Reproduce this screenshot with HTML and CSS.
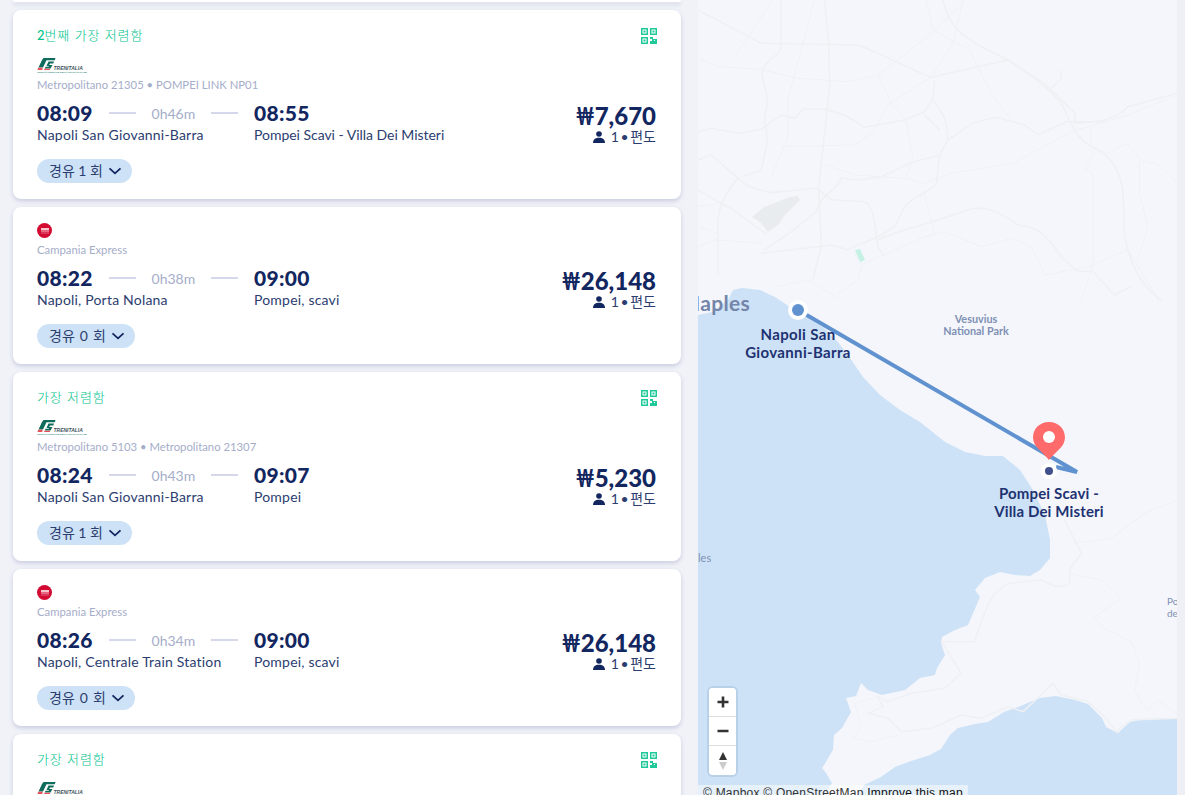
FILE: index.html
```html
<!DOCTYPE html>
<html lang="ko">
<head>
<meta charset="utf-8">
<title>Napoli - Pompei</title>
<link rel="stylesheet" href="styles.css">
</head>
<body>
<svg class="defs" width="0" height="0" aria-hidden="true">
  <defs>
    <symbol id="qr" viewBox="0 0 16 16">
      <g fill="none" stroke="#1fc99a" stroke-width="1.500">
        <rect x=".75" y=".75" width="5.500" height="5.500"/><rect x="9.750" y=".75" width="5.500" height="5.500"/><rect x=".75" y="9.750" width="5.500" height="5.500"/>
      </g>
      <g fill="#1fc99a">
        <rect x="2.500" y="2.500" width="2" height="2"/><rect x="11.500" y="2.500" width="2" height="2"/><rect x="2.500" y="11.500" width="2" height="2"/>
        <path d="M9 9h3v2h4v5H9v-3h2v-2H9zM13 12v1h1v-1z"/>
      </g>
    </symbol>
    <symbol id="person" viewBox="0 0 12 12">
      <circle cx="6" cy="3" r="2.800" fill="#12265f"/>
      <path d="M0 12c0-3.400 2.400-5.200 6-5.200s6 1.800 6 5.200z" fill="#12265f"/>
    </symbol>
    <symbol id="chev" viewBox="0 0 14 8">
      <path d="M1.500 1.300 7 6.300l5.500-5" fill="none" stroke="#12265f" stroke-width="1.800"/>
    </symbol>
    <symbol id="fs" viewBox="0 0 50 16">
      <path d="M6.500 1H18.500L17.800 3.200H9.500L6 10.500H1.500L5 3z" fill="#0f6b5c"/>
      <path d="M11.500 4.500H17L16.300 6.500H13L12.200 8H15.500L13.500 11.500H7.800L8.500 9.800H11.500L12 9H9.500z" fill="#0f6b5c"/>
      <path d="M1.300 10.800H5.800L5.200 13H.4zM7.500 11.700H13.300L12.800 13H7z" fill="#e8505a"/>
      <text x="16.500" y="13" class="fs-name">TRENITALIA</text>
      <text x="0" y="15.800" class="fs-sub">GRUPPO FERROVIE DELLO STATO ITALIANE</text>
    </symbol>
  </defs>
</svg>

<div class="page">
  <main class="results">
    <div class="card-stub"></div>

    <article class="card">
      <div class="top"><span class="tag"><b>2</b>번째 가장 저렴함</span><svg class="qr"><use href="#qr"/></svg></div>
      <svg class="logo-fs"><use href="#fs"/></svg>
      <p class="carrier">Metropolitano 21305 • POMPEI LINK NP01</p>
      <div class="body">
        <div class="route">
          <div class="leg"><span class="time">08:09</span><i class="rule"></i><span class="dur">0h46m</span><i class="rule"></i></div>
          <span class="time">08:55</span>
          <span class="station">Napoli San Giovanni-Barra</span>
          <span class="station station-tight">Pompei Scavi - Villa Dei Misteri</span>
        </div>
        <div class="fare"><span class="price"><span class="won">₩</span>7,670</span><span class="pax"><svg class="person"><use href="#person"/></svg>1 • 편도</span></div>
      </div>
      <button class="stops">경유 1 회<svg class="chev"><use href="#chev"/></svg></button>
    </article>

    <article class="card">
      <span class="logo-ce"><i></i></span>
      <p class="carrier">Campania Express</p>
      <div class="body">
        <div class="route">
          <div class="leg"><span class="time">08:22</span><i class="rule"></i><span class="dur">0h38m</span><i class="rule"></i></div>
          <span class="time">09:00</span>
          <span class="station">Napoli, Porta Nolana</span>
          <span class="station">Pompei, scavi</span>
        </div>
        <div class="fare"><span class="price"><span class="won">₩</span>26,148</span><span class="pax"><svg class="person"><use href="#person"/></svg>1 • 편도</span></div>
      </div>
      <button class="stops stops-wide">경유 0 회<svg class="chev"><use href="#chev"/></svg></button>
    </article>

    <article class="card">
      <div class="top"><span class="tag">가장 저렴함</span><svg class="qr"><use href="#qr"/></svg></div>
      <svg class="logo-fs"><use href="#fs"/></svg>
      <p class="carrier">Metropolitano 5103 • Metropolitano 21307</p>
      <div class="body">
        <div class="route">
          <div class="leg"><span class="time">08:24</span><i class="rule"></i><span class="dur">0h43m</span><i class="rule"></i></div>
          <span class="time">09:07</span>
          <span class="station">Napoli San Giovanni-Barra</span>
          <span class="station">Pompei</span>
        </div>
        <div class="fare"><span class="price"><span class="won">₩</span>5,230</span><span class="pax"><svg class="person"><use href="#person"/></svg>1 • 편도</span></div>
      </div>
      <button class="stops">경유 1 회<svg class="chev"><use href="#chev"/></svg></button>
    </article>

    <article class="card">
      <span class="logo-ce"><i></i></span>
      <p class="carrier">Campania Express</p>
      <div class="body">
        <div class="route">
          <div class="leg"><span class="time">08:26</span><i class="rule"></i><span class="dur">0h34m</span><i class="rule"></i></div>
          <span class="time">09:00</span>
          <span class="station">Napoli, Centrale Train Station</span>
          <span class="station">Pompei, scavi</span>
        </div>
        <div class="fare"><span class="price"><span class="won">₩</span>26,148</span><span class="pax"><svg class="person"><use href="#person"/></svg>1 • 편도</span></div>
      </div>
      <button class="stops stops-wide">경유 0 회<svg class="chev"><use href="#chev"/></svg></button>
    </article>

    <article class="card">
      <div class="top"><span class="tag">가장 저렴함</span><svg class="qr"><use href="#qr"/></svg></div>
      <svg class="logo-fs"><use href="#fs"/></svg>
    </article>
  </main>

  <section class="map">
    <svg class="map-art" viewBox="698 0 479 795" width="479" height="795" aria-hidden="true">
      <path class="sea" d="M698 315 L712 312 L728 300 L733 290 L742 288 L760 290 L775 297 L790 307 L806 317 L823 327 L838 342 L850 358 L863 377 L880 395 L900 410 L920 422 L945 442 L965 452 L985 456 L1003 456 L1020 470 L1033 490 L1045 515 L1050 540 L1050 558 L1040 570 L1030 576 L1015 575 L1000 572 L985 578 L975 590 L980 597 L968 625 L955 630 L942 637 L941 643 L945 655 L937 668 L935 675 L920 678 L905 690 L882 695 L868 690 L861 683 L856 696 L846 698 L851 712 L842 728 L834 735 L833 750 L824 765 L822 768 L826 773 L832 783 L824 795 L698 795Z"/>
      <path class="sea" d="M858 795 L864 785 L881 777 L895 767 L911 761 L930 755 L941 749 L950 735 L958 728 L975 724 L988 722 L1004 712 L1018 707 L1040 698 L1056 696 L1075 700 L1088 704 L1102 718 L1106 727 L1118 733 L1130 722 L1145 719 L1177 718 L1177 795Z"/>
      <path class="airport" d="M752 217 L764 207 L772 204 L790 197 L798 196 L800 200 L785 215 L778 225 L768 232 L760 222Z"/>
      <path class="park" d="M855 250 L860 249 L865 260 L860 262Z"/>
      <g transform="translate(698 0) scale(.3333)">
        <g class="road">
          <path d="M0 30 L190 130 L480 135 C560 165 640 210 700 232 L930 180 L1040 250 L1130 340 L1130 370 C1210 365 1250 360 1290 320 L1437 280"/>
          <path d="M250 0 C245 60 255 120 245 155 C220 180 195 190 192 220 C195 260 215 280 205 330 C190 360 215 400 205 440 L190 510 L130 530"/>
          <path d="M380 0 L392 130 L395 260 L380 400 L362 560 L370 740 L345 835"/>
          <path d="M735 0 C750 70 780 100 850 140 L930 180 C990 220 1050 260 1090 310 C1120 370 1130 410 1180 440 C1230 465 1260 490 1275 570 L1280 710 C1300 800 1330 860 1390 900"/>
          <path d="M0 395 L40 385 L120 400 L190 388 L250 345 L290 355 L315 328 L380 328 L440 345 L500 382 L620 360 L680 335 L705 295 L710 245"/>
          <path d="M680 345 L725 390"/>
          <path d="M705 300 C735 340 745 350 750 420 L725 465 L715 550 C700 575 650 585 620 620 L590 680 C540 720 480 730 450 750 L400 735 L190 760"/>
          <path d="M750 420 L825 368 L895 352 L980 375 L1020 405 L1105 365 L1220 365"/>
          <path d="M430 535 L480 540 L550 530 L640 488 L725 465"/>
          <path d="M0 480 L40 465 L120 535 C150 565 170 565 215 578 L350 565 C375 570 385 600 410 600 L500 605 C530 620 530 680 540 740 L558 768"/>
          <path d="M430 535 C420 560 395 575 370 600 C350 650 370 620 280 695 L200 750"/>
          <path d="M120 535 C70 590 55 640 60 710 L60 820"/>
          <path d="M0 570 L70 610 C110 625 150 670 205 700"/>
          <path d="M540 720 C600 690 700 670 780 640 C830 620 870 610 960 675 C1020 680 1040 700 1090 770 L1135 812 L1185 815 L1250 885 L1298 860"/>
          <path d="M1060 265 L1090 235 L1090 212"/>
        </g>
        <g class="road faint">
          <path d="M110 170 L225 0M0 175 L60 200 L190 208 L300 235 L450 245 L540 225 L700 100 L800 5"/>
          <path d="M350 0 L320 110 L270 300 L270 410 L220 530"/>
          <path d="M685 0 L705 90 L815 150 L880 280 L940 360"/>
          <path d="M250 440 L470 435 L520 400 L575 310 L700 230 L765 130 L795 0"/>
          <path d="M540 225 L580 310 L625 360 L645 480 L625 530"/>
          <path d="M385 495 L470 525 L620 535 L675 550 L760 520 L945 490 L1120 395 L1290 345 L1437 285"/>
          <path d="M470 760 L490 795 L680 710 L740 695 L850 740 L940 715 L1000 740 L1040 825 L1170 800 L1290 750 L1380 900"/>
          <path d="M1180 380 L1180 440 L1230 460 L1285 430 L1330 480 L1380 495 L1437 545"/>
          <path d="M1185 460 L1160 505 L1185 520 L1185 800 L1150 900"/>
          <path d="M1325 480 L1325 580 L1350 680 L1320 780"/>
          <path d="M675 570 L710 700"/>
          <path d="M490 800 L480 840 L420 880M330 840 L430 900M240 860 L330 840"/>
          <path d="M0 740 L50 720 L190 730M0 680 L60 700M0 620 L60 610"/>
        </g>
      </g>
      <g transform="translate(698 500) scale(.3333)">
        <g class="road">
          <path d="M1100 60 L1150 160 L1115 210 L1115 250 C1085 270 1060 255 1030 240 L930 250 C880 280 870 300 830 425 L730 425 L790 520 L740 565 L640 580 L570 605 L540 590 L555 620 L510 640 L570 655 L610 695 L700 685 L790 645 L850 655 L930 620 L975 635 L1035 580 L1065 550 L1090 585 L1170 605 L1220 650 L1255 695 L1300 660 L1437 655"/>
        </g>
        <g class="road faint">
          <path d="M1130 130 L1240 115 L1340 40 L1437 0M1115 220 L1210 240 L1270 295 L1190 350 L1210 380 L1300 425 L1325 490 L1310 570 L1345 630 L1380 600 L1437 640"/>
          <path d="M540 590 L470 610 L490 680 L465 715 L520 725 L600 705"/>
        </g>
      </g>
      <path class="route-line" d="M798 310 L1077 472 L1056 467"/>
      <circle class="stop-ring" cx="798" cy="310" r="10"/>
      <circle class="stop-start" cx="798" cy="310" r="6"/>
      <circle class="stop-ring" cx="1049" cy="471" r="8"/>
      <circle class="stop-end" cx="1049" cy="471" r="4"/>
      <path class="pin" d="M1049 422 C1039.500 422 1033 429 1033 437.500 C1033 447 1043 452 1049 460 C1055 452 1065 447 1065 437.500 C1065 429 1058.500 422 1049 422Z"/>
      <circle class="pin-hole" cx="1049" cy="437" r="6"/>
    </svg>
    <span class="place place-naples">Naples</span>
    <span class="place place-naples-s">les</span>
    <span class="place place-park">Vesuvius<br>National Park</span>
    <span class="place place-po">Po<br>de</span>
    <span class="stop-label label-a">Napoli San<br>Giovanni-Barra</span>
    <span class="stop-label label-b">Pompei Scavi -<br>Villa Dei Misteri</span>
    <div class="zoom">
      <button class="zoom-btn"><svg viewBox="0 0 14 14"><path d="M7 1.500v11M1.500 7h11" stroke="#333" stroke-width="2.600"/></svg></button>
      <button class="zoom-btn"><svg viewBox="0 0 14 14"><path d="M1.500 7h11" stroke="#333" stroke-width="2.600"/></svg></button>
      <button class="zoom-btn"><svg viewBox="0 0 14 20"><path d="M7 1l4 8H3z" fill="#333"/><path d="M7 19l-4-8h8z" fill="#ccc"/></svg></button>
    </div>
    <div class="attrib">© Mapbox © OpenStreetMap <b>Improve this map</b></div>
  </section>
  <div class="edge"></div>
</div>
</body>
</html>
```

FILE: styles.css
```css
* { box-sizing: border-box; }
html, body { margin: 0; height: 795px; overflow: hidden; }
body { font-family: "Lato", "Noto Sans CJK KR", sans-serif; color: #12265f; background: #f0f2f8; }
.defs { position: absolute; }
.page { display: flex; height: 795px; overflow: hidden; }

.results { width: 698px; flex: none; height: 795px; overflow: hidden; padding: 0 17px 0 13px; display: flex; flex-direction: column; gap: 8px; background: #f0f2f8; }
.card-stub { height: 2px; flex: none; background: #fff; border-radius: 0 0 8px 8px; box-shadow: 0 2px 4px rgba(60,70,130,.22); }
.card { flex: none; background: #fff; border-radius: 8px; padding: 16px 25px 16px 24px; box-shadow: 0 2px 4px rgba(60,70,130,.22); }
.top { display: flex; justify-content: space-between; align-items: flex-start; height: 20px; margin-bottom: 11px; }
.tag { font: 300 13px/18px "Noto Sans CJK KR", sans-serif; letter-spacing: .85px; color: #00c48c; }
.tag b { font-weight: 500; font-family: "Lato", sans-serif; letter-spacing: 0; }
.qr { width: 16px; height: 16px; margin: 2px -1px 0 0; display: block; }
.logo-fs { display: block; width: 50px; height: 16px; }
.fs-name { font: italic 700 5px "Liberation Sans", sans-serif; fill: #3f5560; }
.fs-sub { font: 700 2.300px "Liberation Sans", sans-serif; fill: #2b8a78; }
.logo-ce { display: flex; align-items: center; justify-content: center; width: 15px; height: 15px; border-radius: 50%; background: #d30b32; }
.logo-ce i { display: block; width: 8px; height: 6px; background: linear-gradient(#f7c3cd 0 2px, #e8677f 2px 4px, #d9385a 4px); }
.carrier { margin: 4px 0 0; font-size: 11.300px; line-height: 16px; color: #a5adc9; }
.body { display: flex; justify-content: space-between; align-items: flex-start; margin-top: 8px; }
.route { display: grid; grid-template-columns: 217px 1fr; row-gap: 0; align-items: center; }
.leg { display: flex; align-items: center; gap: 16px; padding-right: 16px; }
.time { font-size: 21px; line-height: 24px; font-weight: 900; letter-spacing: .3px; color: #12265f; }
.rule { flex: 1; height: 2px; background: #d5d8ea; }
.dur { font-size: 14px; color: #a5adc9; }
.station { font-size: 14px; line-height: 20px; letter-spacing: .2px; color: #2c3d70; }
.station-tight { letter-spacing: -.03px; }
.fare { display: flex; flex-direction: column; align-items: flex-end; margin-top: 1px; }
.price { font-size: 24px; line-height: 28px; font-weight: 900; color: #12265f; }
.won { display: inline-block; width: 19px; transform: scaleX(.7); transform-origin: left center; }
.pax { display: flex; align-items: center; gap: 6px; margin-top: -2px; font-size: 14px; line-height: 17px; word-spacing: -2px; color: #2c3d70; }
.person { width: 12px; height: 12px; }
.stops { display: flex; align-items: center; gap: 5px; height: 24px; margin-top: 14px; padding: 0 10px 0 12px; border: 0; border-radius: 12px; background: #cde2f6; font: 400 14px/24px "Lato", "Noto Sans CJK KR", sans-serif; color: #2c3d70; }
.stops-wide { word-spacing: 1.500px; }
.chev { width: 14px; height: 8px; }

.map { position: relative; width: 479px; height: 795px; flex: none; overflow: hidden; background: #f4f6fb; }
.map-art { display: block; }
.edge { flex: 1; background: #eff0f6; }
.sea { fill: #cde2f6; }
.airport { fill: #e9ecee; }
.park { fill: #c4f1e4; }
.road { fill: none; stroke: #eef0f3; stroke-width: 4.500; stroke-linejoin: round; stroke-linecap: round; }
.road.faint { stroke: #f0f1f6; stroke-width: 3; }
.route-line { fill: none; stroke: #5f92cf; stroke-width: 4; stroke-linejoin: miter; }
.stop-ring { fill: #fff; }
.stop-start { fill: #5f92cf; }
.stop-end { fill: #40508c; }
.pin { fill: #ff6b6b; }
.pin-hole { fill: #fff; }

.place { position: absolute; color: #7f90b4; }
.place-naples { right: 427px; top: 292px; font-size: 21px; line-height: 22px; letter-spacing: .3px; font-weight: 700; color: #7485aa; white-space: nowrap; }
.place-naples-s { left: 0; top: 551px; font-size: 11px; line-height: 14px; }
.place-park { left: 228px; top: 313px; width: 100px; text-align: center; font-size: 10.800px; line-height: 12px; font-weight: 700; }
.place-po { left: 469px; top: 595px; font-size: 10px; line-height: 12px; }
.stop-label { position: absolute; width: 150px; text-align: center; font-size: 15px; line-height: 18px; letter-spacing: .35px; font-weight: 700; color: #1e3272; }
.label-a { left: 25px; top: 325px; }
.label-b { left: 276px; top: 484px; letter-spacing: .15px; }

.zoom { position: absolute; left: 9px; top: 686px; width: 31px; display: flex; flex-direction: column; background: #fff; border: 2px solid #b8d0e8; border-radius: 6px; overflow: hidden; }
.zoom-btn { height: 29px; padding: 0; border: 0; background: #fff; display: flex; align-items: center; justify-content: center; border-bottom: 1px solid #ddd; }
.zoom-btn:last-child { border-bottom: 0; }
.zoom-btn svg { width: 14px; height: 14px; }
.zoom-btn:last-child svg { height: 20px; }
.attrib { position: absolute; left: 0; top: 785px; width: 270px; height: 16px; padding-left: 5px; background: rgba(255,255,255,.5); font: 12px/16px "Liberation Sans", sans-serif; letter-spacing: .23px; color: #333; white-space: nowrap; }
.attrib b { font-weight: 400; color: #111; }
```
